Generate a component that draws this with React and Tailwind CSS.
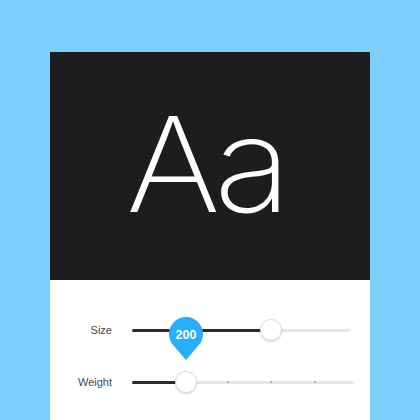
export default function App() {
  return (
    <div className="w-[420px] h-[420px] overflow-hidden bg-[#7fcffc] pt-[52px]">
      <div className="ml-[50px] w-[320px] h-[368px] flex flex-col">
        {/* preview */}
        <div className="h-[228px] bg-[#1d1d20] flex justify-center">
          <div className="pt-[46px] text-[132px] leading-none font-extralight text-white tracking-[-6px] scale-x-[1.09] pr-[8px] font-['Inter',sans-serif]">
            Aa
          </div>
        </div>

        {/* controls */}
        <div className="flex-1 bg-white pt-[39px] flex flex-col gap-[30px] font-['Liberation_Sans',Arial,sans-serif]">
          <div className="flex items-center h-[22px]">
            <div className="w-[62px] text-right text-[11px] text-[#4a4a4a]">Size</div>
            <div className="ml-[20px] relative w-[218px] h-[3px] rounded-full bg-[#e6e6e6]">
              <div className="absolute left-0 top-0 h-[3px] w-[130px] rounded-full bg-[#2b2b2b]" />
              <div className="absolute left-[128px] top-[-10px] w-[22px] h-[22px] rounded-full bg-white border border-[#dcdcdc] shadow-[0_1px_2px_rgba(0,0,0,0.15)]" />
              {/* value balloon */}
              <div className="absolute left-[37px] top-[-12px] w-[34px] h-[43px] z-10">
                <svg width="34" height="43" viewBox="0 0 34 43" className="absolute inset-0">
                  <path d="M17 43 L4.13 28.1 A17 17 0 1 1 29.87 28.1 Z" fill="#29aefc" />
                </svg>
                <div className="absolute left-0 top-[12px] w-[34px] text-center text-[12.5px] leading-none font-bold text-white">
                  200
                </div>
              </div>
            </div>
          </div>

          <div className="flex items-center h-[22px]">
            <div className="w-[62px] text-right text-[11px] text-[#4a4a4a]">Weight</div>
            <div className="ml-[20px] relative w-[222px] h-[3px] rounded-full bg-[#e6e6e6]">
              <div className="absolute left-0 top-0 h-[3px] w-[50px] rounded-full bg-[#2b2b2b]" />
              <div className="absolute left-[95px] top-[0.5px] w-[2px] h-[2px] rounded-full bg-[#9a9a9a]" />
              <div className="absolute left-[138px] top-[0.5px] w-[2px] h-[2px] rounded-full bg-[#9a9a9a]" />
              <div className="absolute left-[182px] top-[0.5px] w-[2px] h-[2px] rounded-full bg-[#9a9a9a]" />
              <div className="absolute left-[43px] top-[-10px] w-[22px] h-[22px] rounded-full bg-white border border-[#dcdcdc] shadow-[0_1px_2px_rgba(0,0,0,0.15)]" />
            </div>
          </div>
        </div>
      </div>
    </div>
  );
}
